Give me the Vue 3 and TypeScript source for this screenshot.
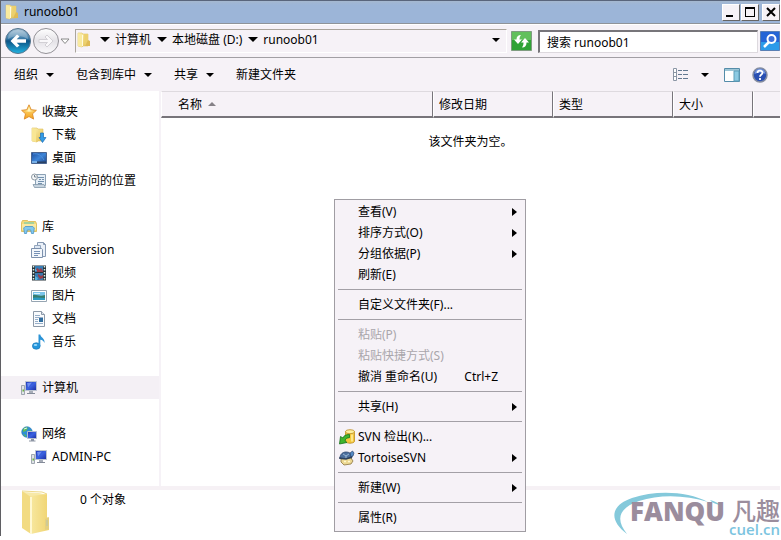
<script setup lang="ts">
import { ref } from 'vue'

interface NavItem {
  label: string
  icon: string
}
interface NavGroup extends NavItem {
  children: NavItem[]
}
interface MenuItem {
  label: string
  icon?: string
  shortcut?: string
  submenu?: boolean
  disabled?: boolean
}

const folderName = 'runoob01'
const query = ref('搜索 runoob01')
const selected = ref('计算机')

const crumbs: string[] = ['计算机', '本地磁盘 (D:)', folderName]

const commands = [
  { label: '组织', dropdown: true },
  { label: '包含到库中', dropdown: true },
  { label: '共享', dropdown: true },
  { label: '新建文件夹', dropdown: false },
]

const groups: NavGroup[] = [
  {
    label: '收藏夹',
    icon: 'star',
    children: [
      { label: '下载', icon: 'download' },
      { label: '桌面', icon: 'desktop' },
      { label: '最近访问的位置', icon: 'recent' },
    ],
  },
  {
    label: '库',
    icon: 'library',
    children: [
      { label: 'Subversion', icon: 'papers' },
      { label: '视频', icon: 'video' },
      { label: '图片', icon: 'picture' },
      { label: '文档', icon: 'document' },
      { label: '音乐', icon: 'music' },
    ],
  },
  { label: '计算机', icon: 'computer', children: [] },
  {
    label: '网络',
    icon: 'network',
    children: [{ label: 'ADMIN-PC', icon: 'computer' }],
  },
]

const menu: MenuItem[][] = [
  [
    { label: '查看(V)', submenu: true },
    { label: '排序方式(O)', submenu: true },
    { label: '分组依据(P)', submenu: true },
    { label: '刷新(E)' },
  ],
  [{ label: '自定义文件夹(F)...' }],
  [
    { label: '粘贴(P)', disabled: true },
    { label: '粘贴快捷方式(S)', disabled: true },
    { label: '撤消 重命名(U)', shortcut: 'Ctrl+Z' },
  ],
  [{ label: '共享(H)', submenu: true }],
  [
    { label: 'SVN 检出(K)...', icon: 'checkout' },
    { label: 'TortoiseSVN', icon: 'tortoise', submenu: true },
  ],
  [{ label: '新建(W)', submenu: true }],
  [{ label: '属性(R)' }],
]
</script>

<template>
  <svg class="sprite" aria-hidden="true">
    <defs>
      <linearGradient id="gFolder" x1="0" y1="0" x2="1" y2="1">
        <stop offset="0" stop-color="#fdf3b4" />
        <stop offset="1" stop-color="#e3bd4c" />
      </linearGradient>
      <linearGradient id="gBig" x1="0" y1="0" x2="1" y2="0">
        <stop offset="0" stop-color="#f7e79e" />
        <stop offset="1" stop-color="#f0d471" />
      </linearGradient>
      <linearGradient id="gScreen" x1="0" y1="0" x2="1" y2="1">
        <stop offset="0" stop-color="#2137b4" />
        <stop offset="0.5" stop-color="#3a62e0" />
        <stop offset="1" stop-color="#1a2ba0" />
      </linearGradient>
      <linearGradient id="gDesk" x1="0" y1="0" x2="1" y2="1">
        <stop offset="0" stop-color="#1c4b9c" />
        <stop offset="0.5" stop-color="#3f86d8" />
        <stop offset="1" stop-color="#1d4386" />
      </linearGradient>
      <linearGradient id="gStar" x1="0" y1="0" x2="0" y2="1">
        <stop offset="0" stop-color="#ffe98a" />
        <stop offset="1" stop-color="#f5a01c" />
      </linearGradient>
      <linearGradient id="gBack" x1="0" y1="0" x2="0" y2="1">
        <stop offset="0" stop-color="#a9c3d6" />
        <stop offset="0.4" stop-color="#3a7ba8" />
        <stop offset="0.5" stop-color="#0d5486" />
        <stop offset="1" stop-color="#22b4e2" />
      </linearGradient>
      <linearGradient id="gFwd" x1="0" y1="0" x2="0" y2="1">
        <stop offset="0" stop-color="#ffffff" />
        <stop offset="0.5" stop-color="#e4e2e7" />
        <stop offset="1" stop-color="#fbfafc" />
      </linearGradient>
    </defs>

    <symbol id="i-folder" viewBox="0 0 16 16">
      <path d="M2 1h4l1 1h5v12H7l-1 1-4-1z" fill="url(#gFolder)" stroke="#e3c566" stroke-width=".6" />
      <path d="M2 1l4 2v12l-4-1z" fill="#f9ea9f" />
      <path d="M8 2h4v10l-3 2z" fill="#ecd06e" />
      <path d="M12 8l2 1v5H9z" fill="#dfba55" />
      <path d="M6.500 3v11" stroke="#fffbe0" />
    </symbol>

    <symbol id="i-bigfolder" viewBox="0 0 30 46">
      <path d="M2 2l16 1 8 2v22l-8 14H9z" fill="#f7e9a8" />
      <path d="M10 6l16-2v23l2 2v11l-18 4z" fill="url(#gBig)" />
      <path d="M1 1l9 6v37l-9-6z" fill="#f2db82" />
      <path d="M10 7v37" stroke="#fff8d2" stroke-width="2" />
      <path d="M24 29l4-2v12l-4 1z" fill="#e4cf80" />
      <path d="M26 30v6" stroke="#b6c4ac" />
      <path d="M1 1l20 1 5 2" fill="none" stroke="#eed98a" />
    </symbol>

    <symbol id="i-star" viewBox="0 0 16 16">
      <path d="M8 .8l2.200 4.900 5.200.6-3.900 3.500 1.100 5.300L8 12.500l-4.700 2.600 1.200-5.300L.6 6.300l5.200-.6z" fill="url(#gStar)" stroke="#dd8a28" stroke-width=".9" stroke-linejoin="round" />
      <path d="M8 3l1.400 3.500 3 .4-4.400.8-4-.8 2.600-.4z" fill="#fff5bc" />
    </symbol>

    <symbol id="i-download" viewBox="0 0 16 16">
      <path d="M1 1h5l1 1h5v12H7l-1 1-5-1z" fill="url(#gFolder)" stroke="#dfbf5c" stroke-width=".6" />
      <path d="M1 1l4 2v12l-4-1z" fill="#f8e694" />
      <path d="M9.500 6h3v4.500H15L11.500 15.500 8 10.500h1.500z" fill="#329be6" stroke="#1a6db8" stroke-width=".7" />
    </symbol>

    <symbol id="i-desktop" viewBox="0 0 16 16">
      <path d="M.5 2.500h15v11H.5z" fill="url(#gDesk)" stroke="#4a6590" />
      <path d="M1 11.500h14V13H1z" fill="#2a4164" />
      <path d="M1 11h5v2H1z" fill="#76aee5" />
      <path d="M2 4c5-1 8 1 11 6" stroke="#4f92de" fill="none" />
    </symbol>

    <symbol id="i-recent" viewBox="0 0 16 16">
      <path d="M4.500 1.500h10v11H4.500z" fill="#e5eef6" stroke="#8ba1b4" />
      <path d="M2 11.500h11l1.500 3H3.500z" fill="#c6d3de" stroke="#8498aa" stroke-width=".8" />
      <path d="M7 4.500h6M8 6.500h2m1 0h2M7 8.500h6M7 10.500h4" stroke="#7491ad" />
      <circle cx="3.500" cy="4" r="3" fill="#f5f7f8" stroke="#8f9ba4" />
      <path d="M3.500 2v2h2" fill="none" stroke="#596a78" stroke-width=".8" />
    </symbol>

    <symbol id="i-library" viewBox="0 0 16 16">
      <path d="M.5 3.500l1-2h5l1 1h7l1 2v8H.5z" fill="#f3d97b" stroke="#d9b64d" stroke-width=".8" />
      <path d="M3 3h10v2H3z" fill="#a6d29c" />
      <path d="M1 5h14v6H1z" fill="#fae9a2" />
      <path d="M3.500 14.500l-.8-5.500 1.500-1.500h7.600L13.300 9l-.8 5.500h-2l-.8-3.500H6.300l-.8 3.500z" fill="#83c8ee" stroke="#4794c8" stroke-width=".8" />
    </symbol>

    <symbol id="i-papers" viewBox="0 0 16 16">
      <path d="M6.500.5h6l2 2v12h-8z" fill="#eaf0f8" stroke="#8799b2" />
      <path d="M12.500.5v2h2" fill="none" stroke="#8799b2" />
      <path d="M3.500 3.500h6v11h-6z" fill="#dce6f2" stroke="#93a5bd" />
      <path d="M.5 6.500h10l1 1v8H.5z" fill="#f3f7fb" stroke="#7d91ad" />
      <path d="M3 9.500h6m-6 2h6m-6 2h4" stroke="#7590b5" />
    </symbol>

    <symbol id="i-video" viewBox="0 0 16 16">
      <path d="M1 .5h14v15H1z" fill="#27333b" />
      <path d="M4 1h8v6H4z" fill="#367eb7" />
      <path d="M4 8h8v7H4z" fill="#3979af" />
      <path d="M5 4l2-1 1 2 2-2 2 3v1H6zM7 9l3 2 2-1v3l-3 1-2-3z" fill="#9a3d49" />
      <path d="M4 11l3 2-1 2H4zM4 3l2 3H4z" fill="#55b4dd" />
      <path d="M2.500 1v14M13.500 1v14" stroke="#dff0e4" stroke-width="1.500" stroke-dasharray="1.500 1.500" />
    </symbol>

    <symbol id="i-picture" viewBox="0 0 16 16">
      <path d="M.5 2.500h15v11H.5z" fill="#fff" stroke="#96a5b2" />
      <path d="M2 4h12v4H2z" fill="#7bc5eb" />
      <path d="M2 7c4-1 6 2 12 0v5H2z" fill="#377d6e" />
      <path d="M2 10c4-1 8 0 12 0v2H2z" fill="#2b9ac1" />
      <path d="M3 5.500h6" stroke="#dcf3fc" />
    </symbol>

    <symbol id="i-document" viewBox="0 0 16 16">
      <path d="M2.500.5h8l3 3v12h-11z" fill="#f9fbfd" stroke="#8c99a8" />
      <path d="M10.500.5v3h3" fill="#dfe6ee" stroke="#8c99a8" />
      <path d="M4 4.500h5M4 6.500h8M4 8.500h3M4 10.500h3M4 12.500h8" stroke="#98afc9" />
      <path d="M8 7h4v4H8z" fill="#316e9f" />
    </symbol>

    <symbol id="i-music" viewBox="0 0 16 16">
      <ellipse cx="5.300" cy="12" rx="3.900" ry="3.300" fill="#2496dc" stroke="#1470b4" stroke-width=".6" />
      <path d="M7.500 12V.5h1.800c.3 3 4.800 3.500 4.200 8.500-.8-2-2-3-4.200-3.300V12z" fill="#2b93d6" />
      <ellipse cx="4.500" cy="11" rx="1.800" ry="1" fill="#9bd9fb" />
    </symbol>

    <symbol id="i-computer" viewBox="0 0 16 16">
      <path d="M4.500 1.500h11v9h-11z" fill="url(#gScreen)" stroke="#bcc4d0" />
      <path d="M6 3l5-.5-4 5z" fill="#6d8cf0" />
      <path d="M8 11h4v2H8z" fill="#a7adb8" />
      <path d="M6 13.500h8" stroke="#848b99" />
      <path d="M.5 5.500h3v9h-3z" fill="#dfe3e8" stroke="#8b94a0" stroke-width=".8" />
      <path d="M1.500 9.500h1.500v2H1.500z" fill="#6bb43e" />
    </symbol>

    <symbol id="i-network" viewBox="0 0 16 16">
      <circle cx="6" cy="6" r="5.300" fill="#2f8fd4" stroke="#267ab4" stroke-width=".6" />
      <path d="M2 3c2-2 4-2 5-1L5 5 2 6zM6 6l4-2 1 3-4 2zM2 8l3 1v2z" fill="#5fbd56" />
      <path d="M3 3l3-1" stroke="#d7f0fb" />
      <path d="M6.500 5.500h9v7h-9z" fill="url(#gScreen)" stroke="#b5bed0" />
      <path d="M10 13h3v1.500h1.500v1H8v-1h2z" fill="#8d95a4" />
    </symbol>

    <symbol id="i-checkout" viewBox="0 0 16 16">
      <path d="M6.500 2.500v10c1 2.300 8 2.300 9 0v-10z" fill="#f4c63c" stroke="#bd8b20" stroke-width=".8" />
      <ellipse cx="11" cy="2.700" rx="4.500" ry="2" fill="#fdf0a0" stroke="#bd8b20" stroke-width=".8" />
      <path d="M13 5.500v7" stroke="#fff0a5" stroke-width="1.500" />
      <path d="M10.500 5.500c-4 0-6 1.500-6.500 3.500L1.500 7.500.5 15l7.500-1.500-2-1.800c.5-2 2-3 4.500-3z" fill="#3fb52d" stroke="#177219" stroke-width=".8" />
    </symbol>

    <symbol id="i-tortoise" viewBox="0 0 16 16">
      <path d="M1 8c0-4 3-6 6-6s5 1 6 4l-1 4H3z" fill="#4d6f9d" stroke="#2c456d" stroke-width=".8" />
      <path d="M4 4l3 2 3-2M7 6v3" stroke="#9ab6d4" fill="none" />
      <path d="M11 3l2.500-2L15 3l-1 3-2 1z" fill="#5389c5" stroke="#2c456d" stroke-width=".7" />
      <path d="M2 9l10-1 2 3-2 3-7 1-3-3z" fill="#ecd791" stroke="#8b7541" stroke-width=".8" />
      <path d="M0 8l7 1 6-2" stroke="#2d405e" stroke-width="1.500" fill="none" />
      <path d="M5 11.500h2m2 0h2" stroke="#fff8ce" stroke-width="1.500" />
    </symbol>
  </svg>

  <div class="window">
    <header class="title">
      <svg class="icon"><use href="#i-folder" /></svg>
      <h1>{{ folderName }}</h1>
      <div class="captions">
        <button type="button" aria-label="最小化">
          <svg width="16" height="14" viewBox="0 0 16 14"><path d="M3 10h7v2H3z" /></svg>
        </button>
        <button type="button" aria-label="最大化">
          <svg width="16" height="14" viewBox="0 0 16 14"><path d="M3 2h10v10H3zM4 4v7h8V4z" fill-rule="evenodd" /></svg>
        </button>
        <button type="button" class="close" aria-label="关闭">
          <svg width="16" height="14" viewBox="0 0 16 14"><path d="M4 3l8 8M12 3l-8 8" stroke="#000" stroke-width="2" /></svg>
        </button>
      </div>
    </header>

    <div class="navbar">
      <div class="travel">
        <button type="button" aria-label="后退">
          <svg width="28" height="28" viewBox="0 0 28 28">
            <circle cx="14" cy="14" r="12.500" fill="url(#gBack)" stroke="#54738c" />
            <path d="M4 12C4 0 24 0 24 12 17 8 11 8 4 12z" fill="#fff" opacity=".25" />
            <path d="M13 7.500L6.500 14l6.500 6.500 2.500-2-2.800-2.700H22v-3.600h-9.300l2.800-2.700z" fill="#fff" />
          </svg>
        </button>
        <button type="button" aria-label="前进">
          <svg width="28" height="28" viewBox="0 0 28 28">
            <circle cx="14" cy="14" r="12.500" fill="url(#gFwd)" stroke="#929096" />
            <path d="M15 8l6 6-6 6-2-2 2.500-2.500H7v-3h8.500L13 10z" fill="#f9f8fa" stroke="#d2d0d5" />
          </svg>
        </button>
        <button type="button" aria-label="最近的页面">
          <svg width="10" height="7" viewBox="0 0 10 7"><path d="M1 1h8L5 5.500z" fill="#fff" stroke="#888" /></svg>
        </button>
      </div>
      <nav class="address" aria-label="地址">
        <svg class="icon"><use href="#i-folder" /></svg>
        <span v-for="c in crumbs" :key="c" class="crumb">
          <i class="caret wide"></i><a href="#">{{ c }}</a>
        </span>
        <button type="button" class="history" aria-label="以前的位置"><i class="caret"></i></button>
      </nav>
      <button type="button" class="refresh" aria-label="刷新">
        <svg width="21" height="20" viewBox="0 0 21 20">
          <path d="M.5.5h20v19H.5z" fill="#2fa336" stroke="#7f9c80" />
          <path d="M1 1h19v8H1z" fill="#62c05c" />
          <path d="M10 4C7 4 5.500 5.500 5.500 8.500H3l4 4.500 4-4.500H8.500C8.500 6.500 9 5.500 10 4z" fill="#fff" />
          <path d="M11 16.500c3 0 4.500-1.500 4.500-5H18l-4-4.500-4 4.500h2.500c0 2-.5 3.500-1.500 5z" fill="#fff" />
        </svg>
      </button>
      <input v-model="query" class="search" type="text" aria-label="搜索" />
      <button type="button" class="go" aria-label="开始搜索">
        <svg width="20" height="20" viewBox="0 0 20 20">
          <path d="M.5.5h19v19H.5z" fill="#2465d6" stroke="#597fb4" />
          <path d="M1 11h18v8H1z" fill="#2c9be9" />
          <path d="M9 11l-5 5" stroke="#fff" stroke-width="2.500" />
          <circle cx="11.500" cy="8" r="4" fill="#3c6fd8" stroke="#fff" stroke-width="2" />
        </svg>
      </button>
    </div>

    <div class="toolbar">
      <button v-for="c in commands" :key="c.label" type="button">
        {{ c.label }}<i v-if="c.dropdown" class="caret"></i>
      </button>
      <div class="tools">
        <button type="button" aria-label="更改视图">
          <svg width="16" height="16" viewBox="0 0 16 16">
            <path d="M.5 1.500h3v12h-3zM.5 5.500h3M.5 9.500h3" fill="#fff" stroke="#8b96a5" />
            <path d="M5 3.500h4m1 0h5M5 7.500h4m1 0h5M5 11.500h4m1 0h5" stroke="#637991" />
          </svg>
          <i class="caret"></i>
        </button>
        <button type="button" aria-label="预览窗格">
          <svg width="16" height="16" viewBox="0 0 16 16">
            <path d="M.5 1.500h15v13H.5z" fill="#fff" stroke="#548ca9" />
            <path d="M1 2h14v2H1z" fill="#9cc5d6" />
            <path d="M10 4h5v10h-5z" fill="#8ccae2" stroke="#5e9fb9" />
          </svg>
        </button>
        <button type="button" aria-label="帮助">
          <svg width="16" height="16" viewBox="0 0 16 16">
            <circle cx="8" cy="8" r="7" fill="#294fb2" stroke="#858da0" stroke-width="1.500" />
            <path d="M2.500 7C3 0 13 0 13.500 7 10 5 6 5 2.500 7z" fill="#7898df" />
            <path d="M5.500 6c0-3 5-3 5-.3C10.500 7.500 8 7.500 8 9.700M8 11v2" fill="none" stroke="#fff" stroke-width="1.800" />
          </svg>
        </button>
      </div>
    </div>

    <div class="body">
      <nav class="side" aria-label="导航窗格">
        <ul v-for="g in groups" :key="g.label">
          <li>
            <a href="#" :class="{ on: selected === g.label }" @click.prevent="selected = g.label">
              <svg class="icon"><use :href="`#i-${g.icon}`" /></svg>{{ g.label }}
            </a>
          </li>
          <li v-for="c in g.children" :key="c.label">
            <a href="#" class="child" :class="{ on: selected === c.label }" @click.prevent="selected = c.label">
              <svg class="icon"><use :href="`#i-${c.icon}`" /></svg>{{ c.label }}
            </a>
          </li>
        </ul>
      </nav>

      <main>
        <table>
          <thead>
            <tr>
              <th class="name" scope="col">名称<i class="sort"></i></th>
              <th class="date" scope="col">修改日期</th>
              <th class="kind" scope="col">类型</th>
              <th class="size" scope="col">大小</th>
              <th></th>
            </tr>
          </thead>
          <tbody>
            <tr>
              <td colspan="5">该文件夹为空。</td>
            </tr>
          </tbody>
        </table>
      </main>
    </div>

    <footer>
      <svg width="30" height="46"><use href="#i-bigfolder" /></svg>
      <p>0 个对象</p>
    </footer>

    <div class="mark">
      <svg width="168" height="48" viewBox="0 0 168 48">
        <path d="M15 46C-4 32-1 17 20 10 44 2 75 3 96 14 74 7 48 6 27 13 7 20 3 31 15 46z" fill="#84c9db" />
        <path d="M98 12c5 1 8 3 10 5-4-1-8-2-10-5z" fill="#84c9db" />
        <text x="18" y="33" class="brand">FANQU</text>
      </svg>
      <div class="side-mark">
        <span class="cn">凡趣</span>
        <span class="site">cuel.cn</span>
      </div>
    </div>

    <div class="menu" role="menu">
      <div v-for="(section, i) in menu" :key="i" class="section">
        <button
          v-for="m in section"
          :key="m.label"
          type="button"
          role="menuitem"
          :disabled="m.disabled"
        >
          <span class="slot"><svg v-if="m.icon" class="icon"><use :href="`#i-${m.icon}`" /></svg></span>
          <span>{{ m.label }}</span>
          <span v-if="m.shortcut" class="shortcut">{{ m.shortcut }}</span>
          <i v-if="m.submenu" class="more"></i>
        </button>
      </div>
    </div>
  </div>
</template>

<style>
body {
  margin: 0;
  background: #fff;
}
</style>

<style scoped>
* {
  box-sizing: border-box;
}
.sprite {
  position: absolute;
  width: 0;
  height: 0;
}
.window {
  position: relative;
  margin-right: 1px;
  border-top: 1px solid #59657c;
  border-left: 1px solid #5f5f63;
  background: #f6f2f7;
  color: #000;
  font: 12px/16px 'Noto Sans', 'Noto Sans CJK SC', sans-serif;
}
button {
  display: flex;
  align-items: center;
  padding: 0;
  border: 0;
  background: none;
  color: inherit;
  font: inherit;
}
a {
  color: inherit;
  text-decoration: none;
}
svg {
  display: block;
  flex: none;
}
.icon {
  width: 16px;
  height: 16px;
}
.caret {
  flex: none;
  border: 4px solid transparent;
  border-top-color: #000;
  border-bottom: 0;
}
.caret.wide {
  border-width: 5px 5px 0;
}

.title {
  display: flex;
  align-items: center;
  height: 23px;
  padding-left: 3px;
  border-bottom: 1px solid #8f9399;
  background: linear-gradient(#a5b8d0, #9cb5d8 4px);
}
h1 {
  margin: 0 auto 0 4px;
  font: inherit;
}
.captions {
  display: flex;
  gap: 1px;
}
.captions button {
  width: 18px;
  height: 17px;
  border: 1px solid;
  border-color: #fff #666 #666 #fff;
  background: #f6f2f7;
}
.captions .close {
  margin-left: 2px;
}

.navbar {
  display: flex;
  align-items: center;
  height: 34px;
  border-top: 1px solid #fff;
  border-bottom: 1px solid #a29fa4;
}
.travel {
  display: flex;
  align-items: center;
  padding: 0 5px 0 3px;
}
.address {
  display: flex;
  flex: 1;
  align-items: center;
  height: 24px;
  padding: 0 6px 3px 0;
  border: 1px solid #fff;
  border-top-color: #aaa59d;
  border-left-color: #aaa59d;
}
.address .icon {
  margin-right: 2px;
}
.crumb {
  display: flex;
  align-items: center;
  gap: 5px;
  margin-left: 6px;
}
.history {
  margin-left: auto;
}
.refresh {
  margin: 0 6px 0 4px;
}
.search {
  width: 220px;
  height: 23px;
  margin-right: 2px;
  padding: 0 7px;
  border: 1px solid #ddd9de;
  border-top: 2px solid #77757a;
  border-left: 2px solid #77757a;
  border-radius: 0;
  background: #fff;
  color: inherit;
  font: inherit;
}

.toolbar {
  display: flex;
  align-items: center;
  gap: 22px;
  height: 33px;
  padding: 0 12px 0 13px;
}
.toolbar button {
  gap: 8px;
}
.tools {
  display: flex;
  gap: 12px;
  margin-left: auto;
}
.tools button:first-child {
  gap: 12px;
  margin-right: 3px;
}

.body {
  display: flex;
}
.side {
  flex: none;
  width: 160px;
  padding: 9px 0 18px;
  border-right: 2px solid #f6f2f7;
  background: #fff;
}
.side ul {
  margin: 0 0 23px;
  padding: 0;
  list-style: none;
}
.side ul:last-child {
  margin: 0;
}
.side a {
  display: flex;
  align-items: center;
  gap: 5px;
  height: 23px;
  padding-left: 20px;
}
.side .child {
  padding-left: 30px;
}
.side .on {
  background: #f4f0f5;
}

main {
  flex: 1;
  min-width: 0;
  background: #fff;
}
table {
  width: 100%;
  table-layout: fixed;
  border-collapse: separate;
  border-spacing: 0;
}
th {
  height: 27px;
  padding: 1px 0 0 5px;
  border: 1px solid #dedadf;
  border-right-color: #77747a;
  border-bottom: 2px solid #77747a;
  border-left-color: #fff;
  background: #f6f2f7;
  font-weight: 400;
  text-align: left;
}
th:last-child {
  border-right: 0;
}
.name {
  width: 272px;
  padding-left: 16px;
}
.date,
.kind {
  width: 120px;
}
.size {
  width: 80px;
}
.sort {
  display: inline-block;
  margin-left: 6px;
  border: 4px solid transparent;
  border-top: 0;
  border-bottom-color: #858187;
  vertical-align: 3px;
}
td {
  padding: 16px 0;
  text-align: center;
}

footer {
  display: flex;
  gap: 29px;
  padding-left: 20px;
  border-top: 4px solid #f6f1f5;
  background: #fff;
}
footer p {
  margin: 2px 0 0;
}

.mark {
  position: absolute;
  right: 0;
  bottom: 0;
}
.brand {
  fill: #9b8d9d;
  font: 800 26px 'Open Sans', sans-serif;
}
.side-mark {
  position: absolute;
  right: 0;
  bottom: 0;
  display: flex;
  flex-direction: column;
  align-items: flex-end;
}
.cn {
  color: #9b8d9d;
  font: 500 24px/24px 'Noto Sans CJK SC', sans-serif;
}
.site {
  color: #7cc4e0;
  font: 600 15px/14px 'Open Sans', sans-serif;
}

.menu {
  position: absolute;
  top: 198px;
  left: 333px;
  width: 192px;
  padding: 1px 2px 3px;
  border: 1px solid #a09da3;
  background: #f6f2f7;
}
.section + .section::before {
  display: block;
  height: 1px;
  margin: 4px 1px;
  background: #a3a0a6;
  content: '';
}
.menu button {
  width: 100%;
  height: 21px;
  padding-right: 6px;
}
.menu button:disabled {
  color: #a9a6ab;
}
.slot {
  width: 21px;
  padding-left: 2px;
}
.shortcut {
  margin: 0 19px 0 auto;
}
.more {
  margin-left: auto;
  border: 4px solid transparent;
  border-right: 0;
  border-left: 5px solid #000;
}
</style>
